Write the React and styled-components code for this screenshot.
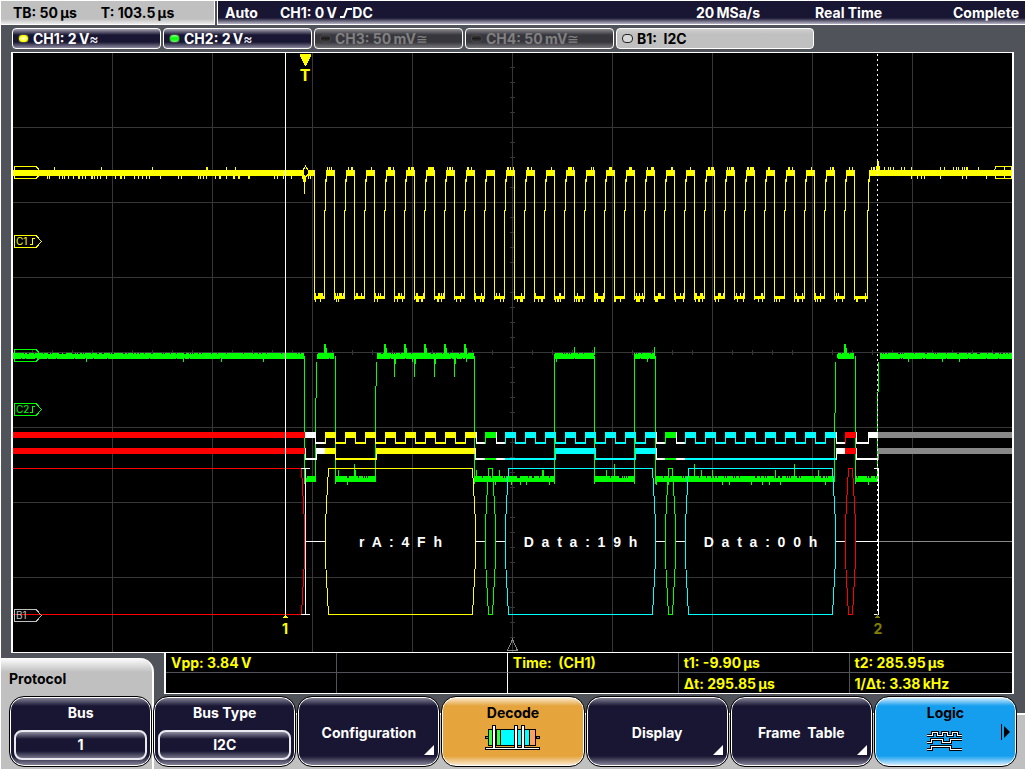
import React from "react";
import styled, { createGlobalStyle } from "styled-components";

const NAVY = "#191633";
const STEEL = "#505359";
const SILVER = "#c0c0c0";
const YELLOW = "#ffff00";
const GREEN = "#00ff00";
const CYAN = "#00ffff";
const RED = "#ff0000";
const GREY = "#888888";

const GlobalStyle = createGlobalStyle`
  * { box-sizing: border-box; }
  body {
    margin: 0;
    background: #fff;
    font-family: Inter, "Liberation Sans", Arial, sans-serif;
    font-size: 14px;
    font-weight: 700;
    line-height: 20px;
  }
  button { font: inherit; cursor: pointer; }
`;

const Frame = styled.div`
  margin: 1px 1px 2px;
  background: ${STEEL};
`;

/* ---------- status bar ---------- */

const StatusBar = styled.header`
  display: flex;
  gap: 2px;
  height: 24px;
  white-space: nowrap;
`;

const Timebase = styled.div`
  display: flex;
  gap: 24px;
  width: 214px;
  padding: 2px 0 0 12px;
  color: #000;
  border-right: 1px solid #fff;
  border-bottom: 1px solid #fff;
  background: linear-gradient(${SILVER} 18px, #f4f4f4 24px);
`;

const Acquisition = styled.div`
  flex: 1;
  display: grid;
  grid-template-columns: 55px 1fr 119px 138px 72px;
  padding: 2px 0 0 7px;
  color: #fff;
  border-left: 1px solid #fff;
  border-bottom: 1px solid #fff;
  background: linear-gradient(${NAVY} 17px, #b9b7c6 23px);
`;

/* ---------- channel tabs ---------- */

const ChannelRow = styled.nav`
  display: flex;
  gap: 2px;
  padding: 3px 11px;
`;

const looks = {
  on: { fg: "#fff", bg: `linear-gradient(#a5a3b4, ${NAVY} 6px, ${NAVY} 13px, #8d8b9e)` },
  off: { fg: "#808080", bg: "linear-gradient(#8b8b8f, #37363d 6px, #37363d 13px, #77777b)" },
  bus: { fg: "#000", bg: `linear-gradient(#d0d0d0, ${SILVER} 5px, ${SILVER})` },
};

const ChannelTab = styled.button`
  display: flex;
  align-items: center;
  gap: 4px;
  flex: 0 1 ${(p) => (p.$look === "bus" ? 198 : 149)}px;
  height: 21px;
  padding: 0 5px;
  color: ${(p) => looks[p.$look].fg};
  background: ${(p) => looks[p.$look].bg};
  border: 1px solid #fff;
  border-radius: 4px;
  white-space: pre;
`;

const Led = styled.span`
  width: 11px;
  height: 9px;
  border: 1px solid ${(p) => (p.$look === "bus" ? "#222" : "#45454a")};
  border-radius: 4px;
  background: ${(p) => p.$fill};
`;

const Coupling = styled.span`
  margin-left: -4px;
  font-weight: 400;
`;

/* ---------- waveform screen ---------- */

const Screen = styled.main`
  margin: 0 11px 0 10px;
  border: solid #fff;
  border-width: 1px 2px;
  background: #000;
`;

const Plot = styled.svg`
  display: block;
  width: 100%;
  height: auto;
  font-family: inherit;
`;

const BusText = styled.text`
  font-family: "Liberation Sans", Arial, sans-serif;
  font-size: 14px;
  fill: #fff;
  text-anchor: middle;
  white-space: pre;
`;

/* ---------- measurements and menu title ---------- */

const InfoRow = styled.section`
  display: flex;
  align-items: flex-end;
  gap: 10px;
  min-height: 43px;
  padding-right: 11px;
`;

const MenuTitle = styled.h1`
  width: 153px;
  height: 38px;
  margin: 0;
  padding: 11px 8px 0;
  font-size: 14px;
  line-height: 20px;
  color: #000;
  background: linear-gradient(#fff, ${SILVER} 14px);
  border-right: 2px solid #fff;
  border-top-right-radius: 14px;
`;

const Readout = styled.table`
  flex: 1;
  align-self: flex-start;
  table-layout: fixed;
  width: 0;
  border-collapse: separate;
  border-spacing: 0;
  color: ${YELLOW};
  background: #000;
  border: solid #fff;
  border-width: 0 2px 1px;
  white-space: pre;
`;

const Cell = styled.td`
  height: 20px;
  padding: 1px 5px 0;
  line-height: 18px;
  border-right: ${(p) => (p.$edge ? `1px solid ${p.$edge}` : "0")};
  border-bottom: ${(p) => (p.$last ? "0" : `1px solid ${STEEL}`)};
`;

/* ---------- soft keys ---------- */

const KeyRow = styled.footer`
  display: grid;
  grid-template-columns: repeat(7, minmax(0, 1fr));
  gap: 1px;
  padding: 0 8px 2px 8px;
  background:
    linear-gradient(90deg, ${SILVER} 151px, #fff 151px, #fff 153px, transparent 153px),
    linear-gradient(transparent 17px, #fff 17px, #fff 19px, ${SILVER} 19px);
`;

const tones = {
  navy: { base: NAVY, edge: "#8f8da0", fg: "#fff" },
  amber: { base: "#e5a43c", edge: "#fbeeda", fg: "#000" },
  blue: { base: "#169eee", edge: "#e4f4ff", fg: "#000" },
};

const SoftKey = styled.button`
  position: relative;
  display: flex;
  flex-direction: column;
  align-items: center;
  justify-content: ${(p) => (p.$centered ? "center" : "flex-start")};
  height: 71px;
  padding: ${(p) => (p.$centered ? "3px 0 0" : "6px 4px 0")};
  color: ${(p) => tones[p.$tone].fg};
  background: linear-gradient(
    ${(p) => tones[p.$tone].edge},
    ${(p) => tones[p.$tone].base} 9px,
    ${(p) => tones[p.$tone].base} 59px,
    ${(p) => tones[p.$tone].edge}
  );
  border: 1px solid #000;
  border-radius: 15px;
  box-shadow: inset 0 0 0 1px #fff;
  white-space: pre;
`;

const KeyValue = styled.span`
  align-self: stretch;
  margin-top: 7px;
  height: 30px;
  line-height: 26px;
  border: 2px solid #e8e8ee;
  border-radius: 8px;
  background: linear-gradient(#8f8da0, ${NAVY} 7px, ${NAVY} 19px, #77758a);
`;

const Corner = styled.svg`
  position: absolute;
  right: 5px;
  bottom: 11px;
`;

const NextPage = styled.svg`
  position: absolute;
  right: 5px;
  top: 27px;
`;

const DecodeIcon = styled.svg`
  margin-top: 2px;
`;

const LogicIcon = styled.svg`
  margin-top: 8px;
`;

/* ---------- trace geometry ---------- */

const rect = (x1, x2, y1, y2) => `M${x1} ${y1}H${x2}V${y2}H${x1}Z`;

/* Repeatable noise, so that each render draws the same trace. */
const noise = (x) => {
  const v = Math.sin(x * 12.9898) * 43758.5453;
  return v - Math.floor(v);
};

const idleDips = [47, 49, 59, 62, 64, 68, 73, 78, 79, 82, 85, 91, 92, 94, 97, 100, 106, 115, 120, 121, 124, 134, 138, 142, 146, 149, 160, 178, 181, 198, 200, 203, 206, 215, 219, 220, 226, 233, 234, 238, 239, 248, 249, 274, 277, 283, 291, 302, 308, 310, 911, 917, 921, 924, 940, 962, 966, 986];
const idlePeaks = [54, 101, 152, 206, 207, 226, 235, 884, 888, 890, 893, 901, 904, 911, 940, 944, 953, 956, 958, 962, 964, 966, 967, 978];

function clockTrace() {
  const d = [rect(13, 314, 170, 176), rect(880, 1012, 170, 176)];
  idleDips.forEach((x) => d.push(rect(x, x + 1, 175, 179)));
  idlePeaks.forEach((x) => d.push(rect(x, x + 1, 167, 171)));
  d.push(rect(304, 305, 170, 194), rect(303, 306, 176, 182), rect(877, 879, 161, 176), rect(876, 880, 166, 176));
  for (let fall = 314; fall <= 854; fall += 20) {
    const rise = fall === 854 ? 867 : fall + 10;
    d.push(rect(fall, fall + 1, 170, 300), rect(fall, rise + 1, 296, 299));
    d.push(rect(rise, rise + 1, 210, 299), rect(rise + 1, rise + 2, 179, 211), rect(rise + 2, rise + 3, 173, 182));
    d.push(rect(rise + 2, rise + 10, 170, 176));
    for (let x = rise + 3; x < rise + 10; x += 1) {
      if (noise(x + 200) > 0.55) d.push(rect(x, x + 1, 167, 171));
    }
    for (let x = fall; x < rise; x += 1) {
      if (noise(x) > 0.7) d.push(rect(x, x + 1, 293, 297));
      if (noise(x + 500) > 0.65) d.push(rect(x, x + 1, 298, 302));
    }
  }
  return d.join("");
}

function dataTrace() {
  const d = [];
  const highs = [[13, 304], [317, 334], [377, 474], [554, 594], [634, 655], [837, 854], [880, 1012]];
  const lows = [[304, 315], [335, 375], [474, 554], [594, 634], [655, 834], [855, 877]];
  highs.forEach(([a, b]) => {
    d.push(rect(a, b, 354, 358));
    for (let x = a; x < b; x += 1) {
      if (noise(x) > 0.22) d.push(rect(x, x + 1, 353, 355));
      if (noise(x + 77) > 0.08) d.push(rect(x, x + 1, 357, 359));
      if (noise(x + 33) > 0.975) d.push(rect(x, x + 1, 358, 362));
    }
  });
  lows.forEach(([a, b]) => {
    d.push(rect(a, b, 478, 482));
    for (let x = a; x < b; x += 1) {
      if (noise(x) > 0.25) d.push(rect(x, x + 1, 476, 479));
      if (noise(x + 90) > 0.97) d.push(rect(x, x + 1, 470, 478));
      if (noise(x + 40) > 0.95) d.push(rect(x, x + 1, 481, 485));
    }
  });
  [304, 335, 474, 554, 594, 634, 655, 855].forEach((x) => d.push(rect(x, x + 1, 356, 484)));
  [[315, 398], [375, 386], [834, 413], [877, 392]].forEach(([x, knee]) =>
    d.push(rect(x, x + 1, knee, 482), rect(x + 1, x + 2, 362, knee)),
  );
  [324, 384, 404, 424, 444, 464, 844].forEach((x) => d.push(rect(x, x + 2, 344, 349), rect(x, x + 3, 348, 355)));
  [394, 414, 434, 454].forEach((x) => d.push(rect(x, x + 1, 358, 377), rect(x, x + 2, 358, 364)));
  [574, 594, 654].forEach((x) => d.push(rect(x, x + 1, 347, 355)));
  [354, 614, 694, 794].forEach((x) => d.push(rect(x, x + 1, 464, 478)));
  return d.join("");
}

/* Decoded logic levels: [from, to, level, colour] */
const W = "#ffffff";
const pulses = (start, colour) => {
  const out = [];
  for (let i = 0; i < 8; i += 1) {
    const x = start + i * 20;
    out.push([x, x + 11, 1, colour]);
    if (i < 7) out.push([x + 10, x + 20, 0, colour]);
  }
  return out;
};

const clockBits = [
  [13, 305, 1, RED], [305, 316, 1, W], [315, 325, 0, W], ...pulses(325, YELLOW),
  [476, 485, 0, W], [485, 496, 1, GREEN], [496, 505, 0, W], ...pulses(505, CYAN),
  [656, 665, 0, W], [665, 676, 1, GREEN], [676, 685, 0, W], ...pulses(685, CYAN),
  [836, 845, 0, W], [845, 856, 1, RED], [856, 869, 0, W], [868, 878, 1, W], [878, 1012, 1, GREY],
];

const dataBits = [
  [13, 305, 1, RED], [305, 317, 0, W], [316, 325, 1, W], [325, 336, 1, YELLOW], [335, 377, 0, YELLOW],
  [376, 476, 1, YELLOW], [475, 485, 0, W], [485, 496, 0, GREEN], [496, 505, 0, W], [505, 556, 0, CYAN],
  [555, 596, 1, CYAN], [595, 636, 0, CYAN], [635, 656, 1, CYAN], [656, 665, 0, W], [665, 676, 0, GREEN],
  [676, 685, 0, W], [685, 836, 0, CYAN], [836, 845, 1, W], [845, 856, 1, RED], [856, 878, 0, W], [878, 1012, 1, GREY],
];

function Bits({ list, top }) {
  return list.map(([a, b, level, colour], i) => {
    const prev = list[i - 1];
    const edge = prev && prev[2] !== level ? rect(a, a + 1, top, top + 12) : "";
    const bar = level ? rect(a, b, top, top + 6) : rect(a, b, top + 10, top + 12);
    return <path key={a} fill={colour} d={bar + edge} />;
  });
}

function BusCell({ from, to, colour, taper = 3, text }) {
  const d = `M${from + taper} 468.5H${to - taper}L${to} 523V560L${to - taper} 614.5H${from + taper}L${from} 560V523Z`;
  return (
    <>
      <path d={d} fill="none" stroke={colour} />
      {text && <BusText x={(from + to) / 2} y="547">{text}</BusText>}
    </>
  );
}

function Tag({ y, colour, label, edge, behind }) {
  return (
    <g>
      <path d={`M14.5 ${y + 0.5}H36L41.5 ${y + 6.5}L36 ${y + 12.5}H14.5Z`} fill="none" stroke={colour} />
      {!behind && <text x="16" y={y + 10} fill={colour} fontSize="10" fontWeight="400">{label}</text>}
      {edge && <path d={`M30 ${y + 9.5}H32.5V${y + 3.5}H35`} fill="none" stroke={colour} />}
    </g>
  );
}

const steps = (from, to, step) => Array.from({ length: Math.floor((to - from) / step) + 1 }, (_, i) => from + i * step);

function Waveforms() {
  const gridX = steps(112, 912, 100).map((x) => rect(x, x + 1, 53, 652)).join("");
  const gridY = steps(127, 577, 75).map((y) => rect(13, 1012, y, y + 1)).join("");
  const ticksX = steps(32, 1002, 20).map((x) => rect(x, x + 1, 350, 355)).join("");
  const ticksY = steps(67, 637, 15).map((y) => rect(510, 515, y, y + 1)).join("");
  return (
    <Plot viewBox="13 53 999 599" shapeRendering="crispEdges" role="img" aria-label="Waveforms and decoded I2C bus">
      <path d={gridX + gridY + ticksX + ticksY} fill="#373737" />
      <path d="M512.5 639.5L507.5 650.5H517.5Z" fill="none" stroke={GREY} />

      <path d={dataTrace()} fill={GREEN} />
      <Tag y={349} colour={GREEN} behind />
      <path d={clockTrace()} fill={YELLOW} />
      <Tag y={166} colour={YELLOW} behind />
      <path d="M1011.5 166.5H996L993.5 172.5L996 178.5H1011.5ZM1004.5 166V178" fill="none" stroke={YELLOW} />
      <path d="M305.5 166L303 170V174L305.5 177L308 174V170Z" fill="#000" stroke={YELLOW} />

      <Bits list={clockBits} top={432} />
      <Bits list={dataBits} top={448} />

      <path d="M13 468.5H301.5L304.5 523V560L301.5 614.5H13" fill="none" stroke={RED} />
      <path d="M305 541.5H325M476 541.5H485M496 541.5H505M656 541.5H665M676 541.5H685M836 541.5H845M856 541.5H878" stroke="#fff" />
      <path d="M879 541.5H1012" stroke={GREY} />
      <BusCell from={325.5} to={475.5} colour={YELLOW} text="r  A  :  4  F  h" />
      <BusCell from={485.5} to={495.5} colour={GREEN} />
      <BusCell from={505.5} to={655.5} colour={CYAN} text="D  a  t  a  :  1  9  h" />
      <BusCell from={665.5} to={675.5} colour={GREEN} />
      <BusCell from={685.5} to={835.5} colour={CYAN} text="D  a  t  a  :  0  0  h" />
      <BusCell from={845.5} to={855.5} colour={RED} />
      <path d="M301 468.5H310M305.5 468V615M301 614.5H310M874 468.5H878.5V614.5H874" fill="none" stroke="#fff" />

      <Tag y={235} colour={YELLOW} label="C1" edge />
      <Tag y={403} colour={GREEN} label="C2" edge />
      <Tag y={609} colour={SILVER} label="B1" />

      <path d={rect(285, 286, 53, 615)} fill="#fff" />
      <path d="M877.5 54V615" stroke="#fff" strokeDasharray="2 3" />
      <path d="M285.5 614L288 618H283Z" fill={YELLOW} />
      <path d="M877.5 614L880 618H875Z" fill="#808000" />
      <text x="285" y="634" fill={YELLOW} fontSize="14" textAnchor="middle">1</text>
      <text x="878" y="634" fill="#808000" fontSize="14" textAnchor="middle">2</text>
      <path d="M300 54H311V56L306 66H305L300 56Z" fill={YELLOW} />
      <text x="305" y="81" fill={YELLOW} fontSize="16" textAnchor="middle">T</text>
    </Plot>
  );
}

const channels = [
  { id: "CH1", value: "2\u2009V", coupling: "≈", look: "on", led: "radial-gradient(#fff, #ffff00 60%)" },
  { id: "CH2", value: "2\u2009V", coupling: "≈", look: "on", led: "linear-gradient(#8f8, #0f0 50%, #6e6)" },
  { id: "CH3", value: "50\u2009mV", coupling: "≅", look: "off", led: "linear-gradient(#444, #1c1c1e 50%, #444)" },
  { id: "CH4", value: "50\u2009mV", coupling: "≅", look: "off", led: "linear-gradient(#444, #1c1c1e 50%, #444)" },
];

const measurements = [
  ["Vpp: 3.84\u2009V", "", "Time:  (CH1)", "t1: -9.90\u2009µs", "t2: 285.95\u2009µs"],
  ["", "", "", "Δt: 295.85\u2009µs", "1/Δt: 3.38\u2009kHz"],
];
const cellEdges = [STEEL, "#fff", STEEL, STEEL, null];

const SubmenuMark = () => (
  <Corner width="10" height="10" viewBox="0 0 10 10" aria-hidden="true">
    <path d="M10 0V10H0Z" fill="#fff" />
  </Corner>
);

export default function App() {
  return (
    <>
      <GlobalStyle />
      <Frame>
        <StatusBar>
          <Timebase>
            <span>TB: 50{"\u2009"}µs</span>
            <span>T: 103.5{"\u2009"}µs</span>
          </Timebase>
          <Acquisition>
            <span>Auto</span>
            <span>
              CH1: 0{"\u2009"}V{" "}
              <svg width="12" height="10" viewBox="0 0 12 10" role="img" aria-label="rising edge">
                <path d="M0 9H4L7 1H12" fill="none" stroke="#fff" strokeWidth="2" />
              </svg>
              DC
            </span>
            <span>20{"\u2009"}MSa/s</span>
            <span>Real Time</span>
            <span>Complete</span>
          </Acquisition>
        </StatusBar>

        <ChannelRow>
          {channels.map((c) => (
            <ChannelTab key={c.id} type="button" $look={c.look}>
              <Led $fill={c.led} $look={c.look} />
              {c.id}: {c.value}
              <Coupling>{c.coupling}</Coupling>
            </ChannelTab>
          ))}
          <ChannelTab type="button" $look="bus">
            <Led $fill="#d8d8d8" $look="bus" />
            B1:  I2C
          </ChannelTab>
        </ChannelRow>

        <Screen>
          <Waveforms />
        </Screen>

        <InfoRow>
          <MenuTitle>Protocol</MenuTitle>
          <Readout>
            <colgroup>
              <col width="20.2%" />
              <col width="20.2%" />
              <col width="20.2%" />
              <col width="20.2%" />
              <col />
            </colgroup>
            <tbody>
              {measurements.map((row, r) => (
                <tr key={r}>
                  {row.map((text, c) => (
                    <Cell key={c} $edge={cellEdges[c]} $last={r === 1}>{text}</Cell>
                  ))}
                </tr>
              ))}
            </tbody>
          </Readout>
        </InfoRow>

        <KeyRow>
          <SoftKey type="button" $tone="navy">
            Bus
            <KeyValue>1</KeyValue>
          </SoftKey>
          <SoftKey type="button" $tone="navy">
            Bus Type
            <KeyValue>I2C</KeyValue>
          </SoftKey>
          <SoftKey type="button" $tone="navy" $centered>
            Configuration
            <SubmenuMark />
          </SoftKey>
          <SoftKey type="button" $tone="amber">
            Decode
            <DecodeIcon width="56" height="26" viewBox="0 0 56 26" shapeRendering="crispEdges" aria-hidden="true">
              <path d="M0.5 11.5H4V13.5H0.5ZM51 11.5H54.5V13.5H51Z" fill="#888" stroke="#000" />
              <path d="M3 4H15V21H3Z" fill="#3cff3c" />
              <path d="M15 4H44V21H15Z" fill="#00ffff" />
              <path d="M44 4H51V21H44Z" fill="#ffa060" />
              <path d="M3.5 4.5H50.5V20.5H3.5ZM11.5 4V21M15.5 4V21M44.5 4V21" fill="none" stroke="#000" />
              <path d="M0.5 22.5H54.5V24.5H0.5Z" fill="#fff" stroke="#000" />
              <path d="M7.5 22.5V0.5H10.5V22.5M29.5 22.5V0.5H32.5V22.5M36.5 22.5V0.5H39.5V22.5" fill="#fff" stroke="#000" />
              <path d="M8 22H10V24H8ZM30 22H32V24H30ZM37 22H39V24H37Z" fill="#fff" />
            </DecodeIcon>
          </SoftKey>
          <SoftKey type="button" $tone="navy" $centered>
            Display
            <SubmenuMark />
          </SoftKey>
          <SoftKey type="button" $tone="navy" $centered>
            Frame  Table
            <SubmenuMark />
          </SoftKey>
          <SoftKey type="button" $tone="blue">
            Logic
            <LogicIcon width="38" height="20" viewBox="0 0 38 20" shapeRendering="crispEdges" aria-hidden="true">
              {[["#000", 3], ["#fff", 1]].map(([colour, width]) => (
                <path
                  key={colour}
                  d="M1 4.5H6.5V1.5H11.5V4.5H16.5V1.5H21.5V4.5H26.5V1.5H31.5V4.5H36M1 11.5H5.5V8.5H16.5V11.5H24.5V8.5H36M1 18.5H5.5V15.5H24.5V18.5H36"
                  fill="none"
                  stroke={colour}
                  strokeWidth={width}
                />
              ))}
            </LogicIcon>
            <NextPage width="10" height="16" viewBox="0 0 10 16" aria-hidden="true">
              <path d="M0.5 0V16" stroke="#000" />
              <path d="M3 2L9 8L3 14Z" fill="#000" />
            </NextPage>
          </SoftKey>
        </KeyRow>
      </Frame>
    </>
  );
}
